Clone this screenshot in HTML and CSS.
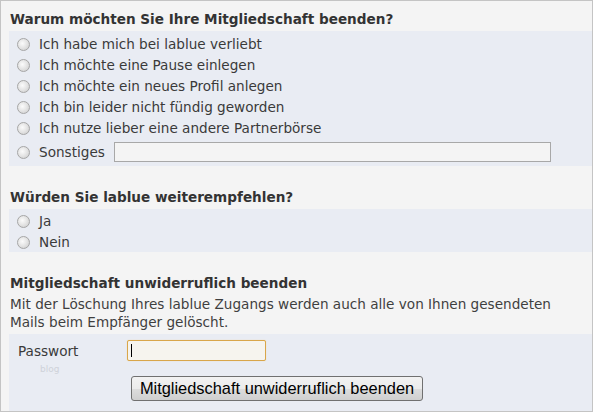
FILE: index.html
```html
<!DOCTYPE html>
<html lang="de">
<head>
<meta charset="utf-8">
<title>Mitgliedschaft beenden</title>
<link rel="stylesheet" href="styles.css">
</head>
<body>
<div class="frame">
  <h2 class="title">Warum möchten Sie Ihre Mitgliedschaft beenden?</h2>
  <div class="panel panel-reasons">
    <label class="row"><input type="radio" name="reason" class="radio"><span>Ich habe mich bei lablue verliebt</span></label>
    <label class="row"><input type="radio" name="reason" class="radio"><span>Ich möchte eine Pause einlegen</span></label>
    <label class="row"><input type="radio" name="reason" class="radio"><span>Ich möchte ein neues Profil anlegen</span></label>
    <label class="row"><input type="radio" name="reason" class="radio"><span>Ich bin leider nicht fündig geworden</span></label>
    <label class="row"><input type="radio" name="reason" class="radio"><span>Ich nutze lieber eine andere Partnerbörse</span></label>
    <label class="row row-other"><input type="radio" name="reason" class="radio"><span>Sonstiges</span><input type="text" class="other-input"></label>
  </div>

  <h2 class="title title-gap">Würden Sie lablue weiterempfehlen?</h2>
  <div class="panel panel-recommend">
    <label class="row"><input type="radio" name="rec" class="radio"><span>Ja</span></label>
    <label class="row"><input type="radio" name="rec" class="radio"><span>Nein</span></label>
  </div>

  <h2 class="title title-gap">Mitgliedschaft unwiderruflich beenden</h2>
  <p class="note">Mit der Löschung Ihres lablue Zugangs werden auch alle von Ihnen gesendeten Mails beim Empfänger gelöscht.</p>
  <div class="panel panel-delete">
    <div class="pw-row">
      <span class="pw-label">Passwort</span>
      <span class="pw-wrap"><input type="password" class="pw-input"></span>
    </div>
    <div class="blog">blog</div>
    <div class="btn-row"><button type="button" class="btn">Mitgliedschaft unwiderruflich beenden</button></div>
  </div>
</div>
</body>
</html>
```

FILE: styles.css
```css
* { box-sizing: border-box; }
html, body { margin: 0; padding: 0; background: #ffffff; }
.frame {
  width: 593px;
  height: 412px;
  border: 1px solid #c4c4c4;
  background: #f4f4f4;
  padding: 0 0 0 8px;
  font-family: "DejaVu Sans", Verdana, sans-serif;
  font-size: 13.6px;
  color: #3a3a3a;
  overflow: hidden;
}
.title {
  margin: 0;
  height: 30px;
  padding: 7px 0 0 1px;
  font-size: 13.6px;
  font-weight: bold;
  line-height: 22px;
  color: #333333;
}
.title-gap {
  margin-top: 20px;
  height: 23px;
  padding-top: 0;
}
.panel {
  background: #e9ecf3;
}
.panel-reasons { padding: 2px 0 1px 0; }
.panel-recommend { padding: 1px 0 0 0; height: 43px; }
.row {
  display: flex;
  align-items: center;
  height: 21px;
  padding-left: 8px;
  gap: 9px;
}
.row-other { height: 27px; }
.radio {
  -webkit-appearance: none;
  appearance: none;
  width: 13px;
  height: 13px;
  margin: 1px 0 0 0;
  border-radius: 50%;
  border: 1px solid #a6a6a6;
  background: radial-gradient(circle at 40% 40%, #fbfbfb 0%, #e6e6e6 45%, #c9c9c9 100%);
  flex: none;
}
.other-input {
  width: 437px;
  height: 20px;
  margin-left: 0;
  border: 1px solid #a8a8a8;
  background: #f4f4f4;
  font: inherit;
}
.note {
  margin: 0;
  padding-left: 1px;
  max-width: 565px;
  line-height: 18px;
  height: 39px;
  color: #3f3f3f;
}
.panel-delete {
  height: 79px;
  padding: 6px 0 0 0;
}
.pw-row {
  display: flex;
  align-items: center;
  height: 21px;
}
.pw-label {
  width: 118px;
  padding-left: 9px;
}
.pw-wrap {
  position: relative;
  display: block;
}
.pw-wrap::after {
  content: "";
  position: absolute;
  left: 4px;
  top: 4px;
  width: 1px;
  height: 13px;
  background: #000000;
}
.pw-input {
  display: block;
  width: 139px;
  height: 21px;
  border: 1px solid #d9a64a;
  border-radius: 2px;
  background: #f6f4ee;
  box-shadow: 0 0 1px #f0cf8a;
}
.blog {
  height: 15px;
  padding: 2px 0 0 31px;
  font-size: 9px;
  line-height: 12px;
  color: #cfd2d9;
}
.btn-row {
  padding-left: 122px;
}
.btn {
  width: 292px;
  height: 25px;
  padding: 0;
  border: 1px solid #707070;
  border-radius: 3px;
  background: linear-gradient(#f2f2f2 0%, #ebebeb 50%, #dddddd 51%, #cfcfcf 100%);
  font-family: "Liberation Sans", Arial, sans-serif;
  font-size: 16.4px;
  color: #000000;
}
```
